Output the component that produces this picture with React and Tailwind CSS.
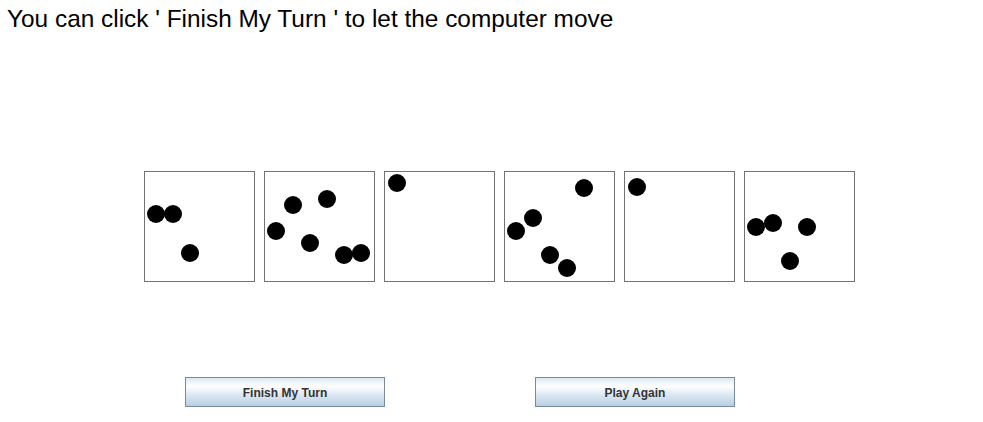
const piles = [
  [[12, 42], [29, 42], [46, 81]],
  [[29, 33], [63, 27], [12, 59], [46, 71], [80, 83], [97, 81]],
  [[13, 11]],
  [[80, 16], [29, 46], [12, 59], [46, 83], [63, 96]],
  [[13, 15]],
  [[12, 55], [29, 51], [63, 55], [46, 89]],
];

function Pile({ dots }) {
  return (
    <div className="relative w-[111px] h-[111px] border border-[#737373] bg-white">
      {dots.map(([x, y], i) => (
        <div
          key={i}
          className="absolute w-[18px] h-[18px] rounded-full bg-black"
          style={{ left: x - 10, top: y - 9 }}
        />
      ))}
    </div>
  );
}

function OceanButton({ children }) {
  return (
    <button className="w-[200px] h-[30px] pt-[2px] border border-[#7a8a99] bg-[linear-gradient(to_bottom,#dde8f3_0%,#ffffff_30%,#dde8f3_60%,#b8cfe5_100%)] text-[12px] font-bold text-[#333333] font-['Liberation_Sans',Arial,sans-serif]">
      {children}
    </button>
  );
}

export default function App() {
  return (
    <div className="w-[983px] h-[422px] bg-white overflow-hidden font-['Liberation_Sans',Arial,sans-serif]">
      <div className="pt-[5px] pl-[7px] text-[24.4px] leading-[28px] text-black">
        You can click ' Finish My Turn ' to let the computer move
      </div>

      <div className="mt-[138px] pl-[144px] flex gap-[9px]">
        {piles.map((dots, i) => (
          <Pile key={i} dots={dots} />
        ))}
      </div>

      <div className="mt-[95px] pl-[185px] flex gap-[150px]">
        <OceanButton>Finish My Turn</OceanButton>
        <OceanButton>Play Again</OceanButton>
      </div>
    </div>
  );
}
